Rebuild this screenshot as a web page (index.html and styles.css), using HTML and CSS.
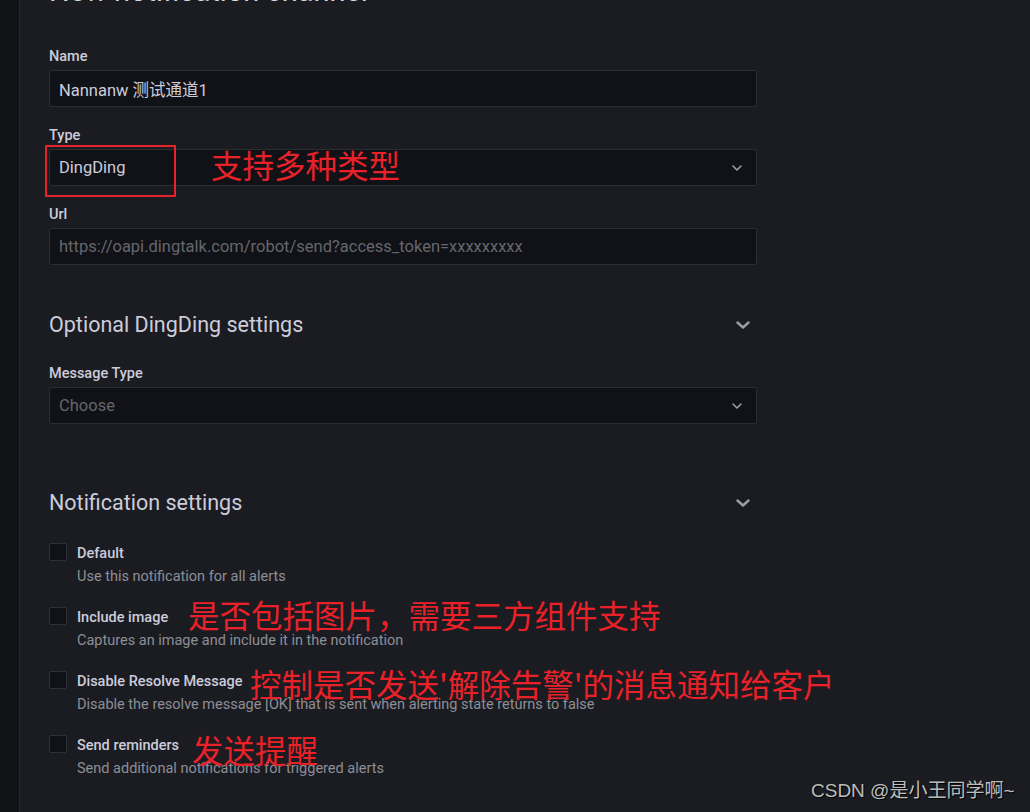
FILE: index.html
```html
<!DOCTYPE html>
<html lang="en">
<head>
<meta charset="utf-8">
<title>New notification channel</title>
<link rel="stylesheet" href="styles.css">
</head>
<body>
<div class="app">
  <aside class="sidebar"></aside>
  <main class="main">
    <div class="content">
      <h1 class="page-title">New notification channel</h1>

      <div class="field">
        <label class="field-label">Name</label>
        <div class="input"><span class="value">Nannanw 测试通道1</span></div>
      </div>

      <div class="field">
        <label class="field-label">Type</label>
        <div class="input select">
          <span class="value">DingDing</span>
          <svg class="chev-sm" viewBox="0 0 10 6" width="10" height="6"><path d="M1 1 L5 5 L9 1" fill="none" stroke="currentColor" stroke-width="1.6" stroke-linecap="round" stroke-linejoin="round"/></svg>
        </div>
      </div>

      <div class="field">
        <label class="field-label">Url</label>
        <div class="input"><span class="placeholder">https://oapi.dingtalk.com/robot/send?access_token=xxxxxxxxx</span></div>
      </div>

      <div class="section-head section-optional">
        <h3 class="section-title">Optional DingDing settings</h3>
        <svg class="chev-lg" viewBox="0 0 14 8" width="14" height="8"><path d="M1.5 1.5 L7 6.5 L12.5 1.5" fill="none" stroke="currentColor" stroke-width="2.4" stroke-linecap="round" stroke-linejoin="round"/></svg>
      </div>

      <div class="field">
        <label class="field-label">Message Type</label>
        <div class="input select">
          <span class="placeholder">Choose</span>
          <svg class="chev-sm" viewBox="0 0 10 6" width="10" height="6"><path d="M1 1 L5 5 L9 1" fill="none" stroke="currentColor" stroke-width="1.6" stroke-linecap="round" stroke-linejoin="round"/></svg>
        </div>
      </div>

      <div class="section-head section-notify">
        <h3 class="section-title">Notification settings</h3>
        <svg class="chev-lg" viewBox="0 0 14 8" width="14" height="8"><path d="M1.5 1.5 L7 6.5 L12.5 1.5" fill="none" stroke="currentColor" stroke-width="2.4" stroke-linecap="round" stroke-linejoin="round"/></svg>
      </div>

      <div class="checks">
        <div class="check-row">
          <span class="checkbox"></span>
          <div class="check-text">
            <div class="check-label">Default</div>
            <div class="check-desc">Use this notification for all alerts</div>
          </div>
        </div>
        <div class="check-row">
          <span class="checkbox"></span>
          <div class="check-text">
            <div class="check-label">Include image</div>
            <div class="check-desc">Captures an image and include it in the notification</div>
          </div>
        </div>
        <div class="check-row">
          <span class="checkbox"></span>
          <div class="check-text">
            <div class="check-label">Disable Resolve Message</div>
            <div class="check-desc">Disable the resolve message [OK] that is sent when alerting state returns to false</div>
          </div>
        </div>
        <div class="check-row">
          <span class="checkbox"></span>
          <div class="check-text">
            <div class="check-label">Send reminders</div>
            <div class="check-desc">Send additional notifications for triggered alerts</div>
          </div>
        </div>
      </div>
    </div>
  </main>
</div>

<div class="mark-box"></div>
<div class="note note-type">支持多种类型</div>
<div class="note note-image">是否包括图片，需要三方组件支持</div>
<div class="note note-resolve">控制是否发送'解除告警'的消息通知给客户</div>
<div class="note note-remind">发送提醒</div>
<div class="watermark">CSDN @是小王同学啊~</div>
</body>
</html>
```

FILE: styles.css
```css
html, body {
  margin: 0;
  padding: 0;
  height: 812px;
  overflow: hidden;
}

body {
  background: #1b1c21;
  color: #ccccdc;
  font-family: Roboto, "Noto Sans CJK SC", sans-serif;
  position: relative;
}

.app {
  display: flex;
  height: 812px;
}

.sidebar {
  width: 19px;
  flex: 0 0 19px;
  background: #111216;
  border-right: 1px solid #26282d;
}

.main {
  flex: 1;
  padding-left: 29px;
}

.content {
  width: 708px;
  display: flex;
  flex-direction: column;
}

.page-title {
  margin: -26px 0 40px;
  font-size: 29px;
  line-height: 34px;
  font-weight: 400;
  color: #d8d9de;
  white-space: nowrap;
}

.field {
  display: flex;
  flex-direction: column;
  margin-bottom: 20px;
}

.field-label {
  font-size: 14.5px;
  line-height: 18px;
  font-weight: 500;
  color: #ccccdc;
  margin-bottom: 4px;
}

.input {
  box-sizing: border-box;
  height: 37px;
  background: #111217;
  border: 1px solid #2b2d33;
  border-radius: 2px;
  display: flex;
  align-items: center;
  padding: 0 9px;
  font-size: 16.5px;
}

.value {
  color: #ccccdc;
}

.placeholder {
  color: #65666d;
}

.select {
  justify-content: space-between;
  padding-right: 14px;
}

.chev-sm {
  color: #9c9da5;
  display: block;
}

.section-head {
  display: flex;
  align-items: center;
  justify-content: space-between;
  padding-right: 7px;
}

.section-optional {
  margin: 28px 0 28px;
}

.section-notify {
  margin: 47px 0 28px;
}

.section-title {
  margin: 0;
  font-size: 21.5px;
  line-height: 24px;
  font-weight: 400;
  color: #ccccdc;
}

.chev-lg {
  color: #9c9da5;
  display: block;
}

.checks {
  display: flex;
  flex-direction: column;
  gap: 21px;
}

.check-row {
  display: flex;
  gap: 10px;
  align-items: flex-start;
}

.checkbox {
  box-sizing: border-box;
  width: 18px;
  height: 18px;
  flex: 0 0 18px;
  background: #111217;
  border: 1px solid #2e3036;
  border-radius: 2px;
}

.check-text {
  padding-top: 2px;
}

.check-label {
  font-size: 14.5px;
  line-height: 18px;
  font-weight: 500;
  color: #ccccdc;
}

.check-desc {
  margin-top: 5px;
  font-size: 14.5px;
  line-height: 18px;
  color: #8d8e97;
  white-space: nowrap;
}

/* annotation overlays */
.mark-box {
  position: absolute;
  left: 45px;
  top: 145px;
  width: 131px;
  height: 52px;
  box-sizing: border-box;
  border: 2px solid #e5232b;
}

.note {
  position: absolute;
  font-family: "Noto Sans CJK SC", sans-serif;
  font-size: 31.5px;
  line-height: 32px;
  color: #ea2129;
  white-space: nowrap;
}

.note-type {
  left: 211px;
  top: 148px;
}

.note-image {
  left: 188px;
  top: 598px;
}

.note-resolve {
  left: 250px;
  top: 667px;
}

.note-remind {
  left: 192px;
  top: 733px;
}

.watermark {
  position: absolute;
  left: 811px;
  top: 779px;
  font-family: "Liberation Sans", "Noto Sans CJK SC", sans-serif;
  font-size: 19px;
  line-height: 24px;
  color: #bdbdbd;
  text-shadow: 1px 1px 1px #000;
  white-space: nowrap;
}
```
